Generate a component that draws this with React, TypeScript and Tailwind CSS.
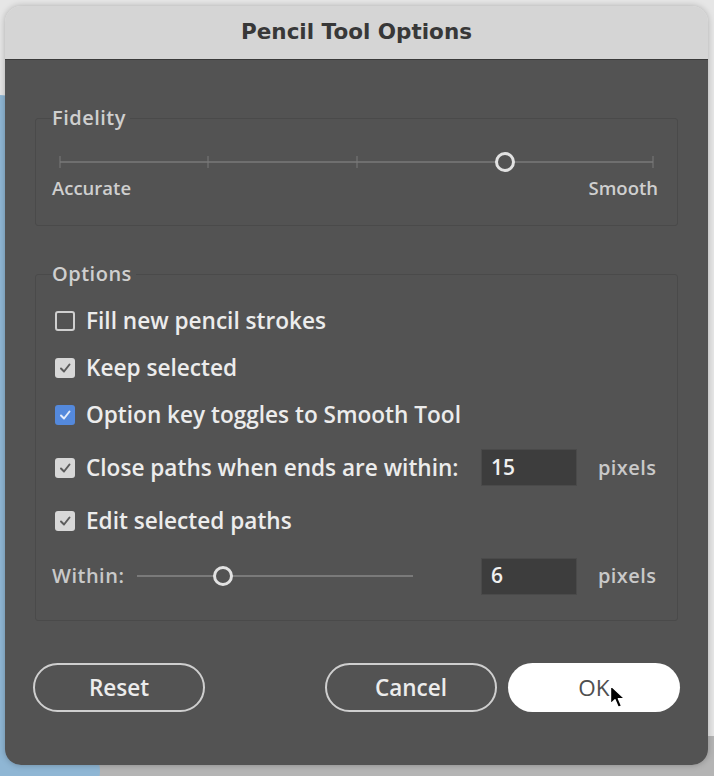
import React from 'react';

const body = { fontFamily: '"Open Sans", "Liberation Sans", sans-serif' };

function Check({ state }: { state: 'off' | 'gray' | 'blue' }) {
  if (state === 'off') {
    return <span className="block h-[20px] w-[20px] shrink-0 rounded-[3px] border-2 border-[#cfcfcf]" />;
  }
  const bg = state === 'blue' ? 'bg-[#5489dc]' : 'bg-[#d7d7d7]';
  const stroke = state === 'blue' ? '#e4ecfa' : '#5c5c5c';
  return (
    <span className={`flex h-[20px] w-[20px] shrink-0 items-center justify-center rounded-[3px] ${bg}`}>
      <svg width="14" height="14" viewBox="0 0 14 14" fill="none">
        <path d="M3 7.5 L6 10.5 L11.5 3.5" stroke={stroke} strokeWidth="2" strokeLinecap="round" strokeLinejoin="round" />
      </svg>
    </span>
  );
}

function CheckRow({ state, label, h, children }: { state: 'off' | 'gray' | 'blue'; label: string; h: string; children?: React.ReactNode }) {
  return (
    <div className={`flex items-center ${h}`}>
      <span className="ml-[3px]">
        <Check state={state} />
      </span>
      <span className="ml-[11px] whitespace-nowrap text-[22.6px] font-semibold text-[#ececec]">{label}</span>
      {children}
    </div>
  );
}

function NumberBox({ value }: { value: string }) {
  return (
    <div className="ml-auto flex shrink-0 items-center">
      <div className="flex h-[37px] w-[96px] shrink-0 items-center border border-[#4a4a4a] bg-[#3d3d3d] pl-[9px] text-[21px] font-semibold text-[#f0f0f0]">
        {value}
      </div>
      <span className="ml-[21px] w-[63px] shrink-0 whitespace-nowrap text-[20px] font-semibold tracking-[0.4px] text-[#c9c9c9]">
        pixels
      </span>
    </div>
  );
}

function Thumb({ left }: { left: string }) {
  return (
    <span
      className="absolute top-1/2 h-[20px] w-[20px] -translate-x-1/2 -translate-y-1/2 rounded-full border-[3px] border-[#e2e2e2] bg-[#535353]"
      style={{ left }}
    />
  );
}

function Cursor() {
  return (
    <svg className="absolute left-[609px] top-[684px] z-20" width="20" height="28" viewBox="0 0 20 28">
      <path
        d="M1.5 1.5 L1.5 20 L6 15.8 L9.3 23.5 L12.6 22 L9.4 14.6 L15.5 14.6 Z"
        fill="#000"
        stroke="#fff"
        strokeWidth="1.4"
        strokeLinejoin="round"
      />
    </svg>
  );
}

export default function App() {
  const ticks = ['0%', '25%', '50%', '75%', '100%'];
  return (
    <div className="relative h-[776px] w-[714px] overflow-hidden bg-[#e6e6e6] pt-[6px]" style={body}>
      <div className="absolute left-[-120px] top-[95px] h-[760px] w-[240px] rounded-[50%] bg-[#8fb6d4]" />
      <div className="absolute bottom-0 left-0 right-0 h-[40px] bg-[#b4b4b4]" />
      <div className="absolute bottom-[-40px] left-[-80px] h-[90px] w-[180px] rounded-[50%] bg-[#8fb6d4]" />

      <div className="relative z-10 ml-[5px] w-[703px] overflow-hidden rounded-[16px] shadow-[0_0_6px_rgba(0,0,0,0.25)]">
        <div
          className="flex h-[54px] items-center justify-center border-b border-[#3a3a3a] bg-[#d5d5d5] text-[21.5px] font-bold text-[#383838]"
          style={{ fontFamily: '"DejaVu Sans", Verdana, sans-serif' }}
        >
          Pencil Tool Options
        </div>

        <div className="bg-[#535353] px-[30px] pb-[53px] pt-[46px]">
          <fieldset className="rounded-[3px] border border-[#4a4a4a] px-[16px] pb-[26px]">
            <legend className="pr-[4px] text-[20px] font-semibold leading-[24px] tracking-[0.5px] text-[#cfcfcf]">Fidelity</legend>
            <div className="relative mx-[8px] mt-[22px] h-[20px]">
              <div className="absolute left-0 right-0 top-[9px] h-[2px] bg-[#6f6f6f]" />
              {ticks.map((t) => (
                <span key={t} className="absolute top-[4px] h-[12px] w-[1px] -translate-x-1/2 bg-[#7a7a7a]" style={{ left: t }} />
              ))}
              <Thumb left="75%" />
            </div>
            <div className="mt-[5px] flex justify-between pr-[3px] text-[18.5px] font-semibold leading-[22px] text-[#cfcfcf]">
              <span>Accurate</span>
              <span>Smooth</span>
            </div>
          </fieldset>

          <fieldset className="mt-[36px] rounded-[3px] border border-[#4a4a4a] px-[16px] pb-[12px]">
            <legend className="pr-[4px] text-[20px] font-semibold leading-[24px] tracking-[0.5px] text-[#cfcfcf]">Options</legend>
            <div className="mt-[11px]">
              <CheckRow state="off" label="Fill new pencil strokes" h="h-[47px]" />
              <CheckRow state="gray" label="Keep selected" h="h-[47px]" />
              <CheckRow state="blue" label="Option key toggles to Smooth Tool" h="h-[47px]" />
              <CheckRow state="gray" label="Close paths when ends are within:" h="h-[59px]">
                <NumberBox value="15" />
              </CheckRow>
              <CheckRow state="gray" label="Edit selected paths" h="h-[47px]" />
              <div className="flex h-[64px] items-center">
                <span className="w-[76px] whitespace-nowrap text-[20px] font-semibold tracking-[0.5px] text-[#c9c9c9]">Within:</span>
                <div className="relative ml-[9px] h-[20px] w-[276px]">
                  <div className="absolute left-0 right-0 top-[9px] h-[2px] bg-[#7a7a7a]" />
                  <Thumb left="31%" />
                </div>
                <NumberBox value="6" />
              </div>
            </div>
          </fieldset>

          <div className="-mx-[2px] mt-[42px] flex items-center text-[22.5px] font-semibold">
            <button className="h-[49px] w-[172px] rounded-full border-2 border-[#cfcfcf] text-[#ececec]">Reset</button>
            <button className="ml-auto h-[49px] w-[172px] rounded-full border-2 border-[#cfcfcf] text-[#ececec]">Cancel</button>
            <button className="ml-[11px] h-[49px] w-[172px] rounded-full bg-white font-normal text-[#4f4f4f]">OK</button>
          </div>
        </div>
      </div>
      <Cursor />
    </div>
  );
}
